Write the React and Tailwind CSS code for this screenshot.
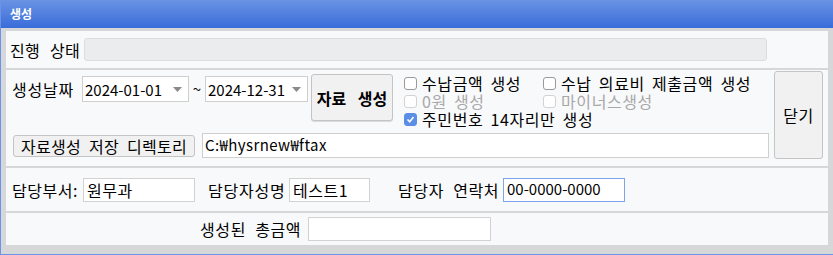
import React from 'react'

const font = { fontFamily: "'Noto Sans CJK KR', 'Liberation Sans', sans-serif" }

function Check({ checked, disabled, label }) {
  return (
    <div className="flex items-center h-[18px] whitespace-nowrap">
      <span
        className={
          'shrink-0 w-[13px] h-[13px] rounded-[3px] border flex items-center justify-center ' +
          (checked
            ? 'bg-[#5b8fe6] border-[#5b8fe6]'
            : disabled
            ? 'bg-white border-[#d2d2d2]'
            : 'bg-white border-[#9a9a9a]')
        }
      >
        {checked && (
          <svg width="9" height="9" viewBox="0 0 9 9">
            <path d="M1.5 4.5 L3.7 6.7 L7.5 2" fill="none" stroke="white" strokeWidth="1.6" />
          </svg>
        )}
      </span>
      <span className={'ml-[5px] text-[16px] leading-none tracking-[0.6px] [word-spacing:3px] ' + (disabled ? 'text-[#a8a8a8]' : 'text-black')}>
        {label}
      </span>
    </div>
  )
}

function DateCombo({ value, width }) {
  return (
    <div className={'h-[26px] bg-white border border-[#cfcfcf] flex items-center pl-[2px] pr-[6px] ' + width}>
      <span className="flex-1 text-[15px] leading-none">{value}</span>
      <svg width="9" height="5" viewBox="0 0 9 5">
        <path d="M0 0 H9 L4.5 5 Z" fill="#8a8a8a" />
      </svg>
    </div>
  )
}

export default function App() {
  return (
    <div style={font} className="w-[833px] h-[255px] bg-[#d6d7d9] border-l border-b border-[#6d93e8] flex flex-col text-black overflow-hidden">
      <div className="h-[28px] shrink-0 bg-gradient-to-b from-[#6a93e4] to-[#3a6cda] flex items-center pl-[9px]">
        <span className="text-white text-[12px] font-bold leading-none">생성</span>
      </div>
      <div className="flex-1 flex flex-col pl-[5px] pr-[5px] pt-[3px] gap-[2px]">
        {/* 진행 상태 */}
        <div className="h-[37px] bg-[#f8f9fb] flex items-center pl-[4px] pr-[61px]">
          <span className="text-[16px] w-[74px] tracking-[0.3px] [word-spacing:6px] whitespace-nowrap">진행 상태</span>
          <div className="flex-1 h-[23px] bg-[#ebecee] border border-[#dcdddf] rounded-[3px]" />
        </div>

        {/* 생성 옵션 */}
        <div className="h-[96px] bg-[#f8f9fb] flex pl-[6px] pr-[5px]">
          <div className="flex-1 flex flex-col">
            <div className="flex h-[63px] pt-[4px]">
              <div className="flex items-start pt-[2px]">
                <span className="text-[16px] leading-[26px] w-[70px] tracking-[0.8px] whitespace-nowrap">생성날짜</span>
                <DateCombo value="2024-01-01" width="w-[107px]" />
                <span className="text-[15px] leading-[26px] w-[16px] text-center">~</span>
                <DateCombo value="2024-12-31" width="w-[103px]" />
              </div>
              <button className="ml-[3px] w-[82px] h-[47px] bg-[#f1f1f2] border border-[#c4c4c4] rounded-[3px] text-[16px] font-bold [word-spacing:8px] shadow-[0_1px_0_#dcdcdc] whitespace-nowrap">
                자료 생성
              </button>
              <div className="ml-[11px] flex">
                <div className="flex flex-col w-[139px]">
                  <Check label="수납금액 생성" />
                  <Check label="0원 생성" disabled />
                  <Check label="주민번호 14자리만 생성" checked />
                </div>
                <div className="flex flex-col">
                  <Check label="수납 의료비 제출금액 생성" />
                  <Check label="마이너스생성" disabled />
                </div>
              </div>
            </div>
            <div className="flex items-center gap-[7px] pl-[1px] pr-[5px]">
              <button className="w-[182px] h-[22px] bg-[#f1f1f2] border border-[#c4c4c4] rounded-[3px] text-[16px] leading-none tracking-[0.3px] [word-spacing:4px] whitespace-nowrap">
                자료생성 저장 디렉토리
              </button>
              <div className="flex-1 h-[25px] bg-white border border-[#cfcfcf] flex items-center pl-[2px] text-[15px] tracking-[0.4px]">
                C:₩hysrnew₩ftax
              </div>
            </div>
          </div>
          <button className="mt-[1px] w-[49px] h-[88px] bg-[#f1f1f2] border border-[#c4c4c4] rounded-[3px] text-[16px] tracking-[0.5px]">
            닫기
          </button>
        </div>

        {/* 담당자 */}
        <div className="h-[43px] bg-[#f8f9fb] flex items-center pl-[6px] text-[16px] whitespace-nowrap">
          <span className="w-[71px] tracking-[0.5px]">담당부서:</span>
          <div className="w-[112px] h-[24px] bg-white border border-[#d2d2d2] flex items-center pl-[3px] tracking-[0.5px]">원무과</div>
          <span className="ml-[13px] w-[81px] tracking-[0.8px]">담당자성명</span>
          <div className="w-[81px] h-[24px] bg-white border border-[#d2d2d2] flex items-center pl-[3px] tracking-[0.5px]">테스트1</div>
          <span className="ml-[28px] w-[105px] tracking-[0.6px] [word-spacing:5px]">담당자 연락처</span>
          <div className="w-[122px] h-[24px] bg-white border border-[#7ea5ea] flex items-center pl-[3px] text-[15px]">00-0000-0000</div>
        </div>

        {/* 총금액 */}
        <div className="h-[32px] bg-[#f8f9fb] flex items-center pl-[194px] text-[16px] whitespace-nowrap">
          <span className="w-[108px] tracking-[0.6px] [word-spacing:5px]">생성된 총금액</span>
          <div className="w-[183px] h-[24px] bg-white border border-[#d2d2d2]" />
        </div>
      </div>
    </div>
  )
}
